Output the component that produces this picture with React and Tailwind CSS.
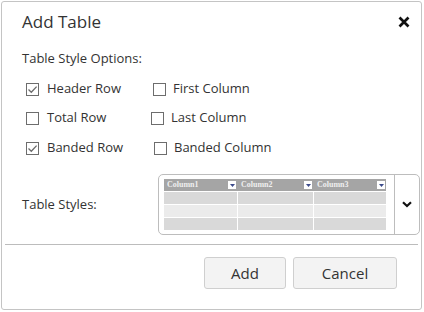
const font = { fontFamily: '"Open Sans", "Noto Sans", sans-serif' }

function Check({ checked }) {
  return (
    <span className="flex h-[13px] w-[13px] shrink-0 items-center justify-center border border-[#6d6d6d] bg-white">
      {checked && (
        <svg width="11" height="11" viewBox="0 0 11 11">
          <path d="M1.5 5.5 L4.3 8.3 L9.6 2.6" fill="none" stroke="#6b6b6b" strokeWidth="1.3" />
        </svg>
      )}
    </span>
  )
}

function Option({ checked, label, gap = 'gap-[8px]' }) {
  return (
    <label className={`flex items-center ${gap} text-[13px] text-[#333]`}>
      <Check checked={checked} />
      <span>{label}</span>
    </label>
  )
}

function Preview() {
  const cols = ['Column1', 'Column2', 'Column3']
  const widths = ['w-[73px]', 'w-[75px]', 'w-[72px]']
  return (
    <div className="flex w-[222px] flex-col gap-[1px]">
      <div className="flex h-[12px] gap-[1px] bg-[#a5a5a5]">
        {cols.map((c, i) => (
          <div key={c} className={`flex ${widths[i]} items-center justify-between pl-[3px] pr-[1px]`}>
            <span className="text-[8px] font-bold leading-none text-[#efefef]" style={{ fontFamily: '"Liberation Serif", serif' }}>{c}</span>
            <span className="flex h-[8px] w-[8px] items-center justify-center bg-white">
              <svg width="5" height="3" viewBox="0 0 5 3"><path d="M0 0 H5 L2.5 3 Z" fill="#3b4a8a" /></svg>
            </span>
          </div>
        ))}
      </div>
      {['bg-[#d9d9d9]', 'bg-[#ebebeb]', 'bg-[#d9d9d9]'].map((bg, r) => (
        <div key={r} className="flex h-[12px] gap-[1px]">
          {widths.map((w, i) => (
            <div key={i} className={`${w} ${bg}`} />
          ))}
        </div>
      ))}
    </div>
  )
}

export default function App() {
  return (
    <div className="h-[312px] w-[424px] bg-white pl-[1px] pt-[1px]" style={font}>
      <div className="flex h-[309px] w-[421px] flex-col rounded-[3px] border border-[#c4c4c4] bg-white">
        <div className="flex items-center justify-between pl-[20px] pr-[11px] pt-[9px]">
          <h1 className="text-[17px] leading-[22px] text-[#333]">Add Table</h1>
          <svg width="12" height="12" viewBox="0 0 12 12">
            <path d="M1.5 1.5 L10.5 10.5 M10.5 1.5 L1.5 10.5" stroke="#111" strokeWidth="2.7" />
          </svg>
        </div>

        <p className="mt-[16px] pl-[20px] text-[13px] leading-[18px] text-[#333]">Table Style Options:</p>

        <div className="mt-[13px] flex flex-col gap-[11px] pl-[24px]">
          <div className="flex h-[18px] items-center">
            <div className="w-[127px]"><Option checked label="Header Row" /></div>
            <Option label="First Column" gap="gap-[7px]" />
          </div>
          <div className="flex h-[18px] items-center">
            <div className="w-[125px]"><Option label="Total Row" /></div>
            <Option label="Last Column" gap="gap-[7px]" />
          </div>
          <div className="mt-[1px] flex h-[18px] items-center">
            <div className="w-[128px]"><Option checked label="Banded Row" /></div>
            <Option label="Banded Column" gap="gap-[7px]" />
          </div>
        </div>

        <div className="mt-[17px] flex items-center pl-[20px]">
          <span className="w-[136px] text-[13px] text-[#333]">Table Styles:</span>
          <div className="flex h-[61px] w-[262px] rounded-[5px] border border-[#bdbdbd]">
            <div className="flex flex-1 items-center pl-[5px]">
              <Preview />
            </div>
            <div className="flex w-[25px] items-center justify-center border-l border-[#bdbdbd]">
              <svg width="10" height="7" viewBox="0 0 10 7">
                <path d="M1 1.2 L5 5 L9 1.2" fill="none" stroke="#111" strokeWidth="2.2" />
              </svg>
            </div>
          </div>
        </div>

        <div className="mx-[3px] mt-[9px] border-t border-[#bcbcbc]" />

        <div className="mt-[12px] flex justify-end gap-[7px] pr-[24px]">
          <button className="h-[32px] w-[82px] rounded-[3px] border border-[#cfcfcf] bg-[#f3f3f3] text-[15px] text-[#333]">Add</button>
          <button className="h-[32px] w-[104px] rounded-[3px] border border-[#cfcfcf] bg-[#f3f3f3] text-[15px] text-[#333]">Cancel</button>
        </div>
      </div>
    </div>
  )
}
